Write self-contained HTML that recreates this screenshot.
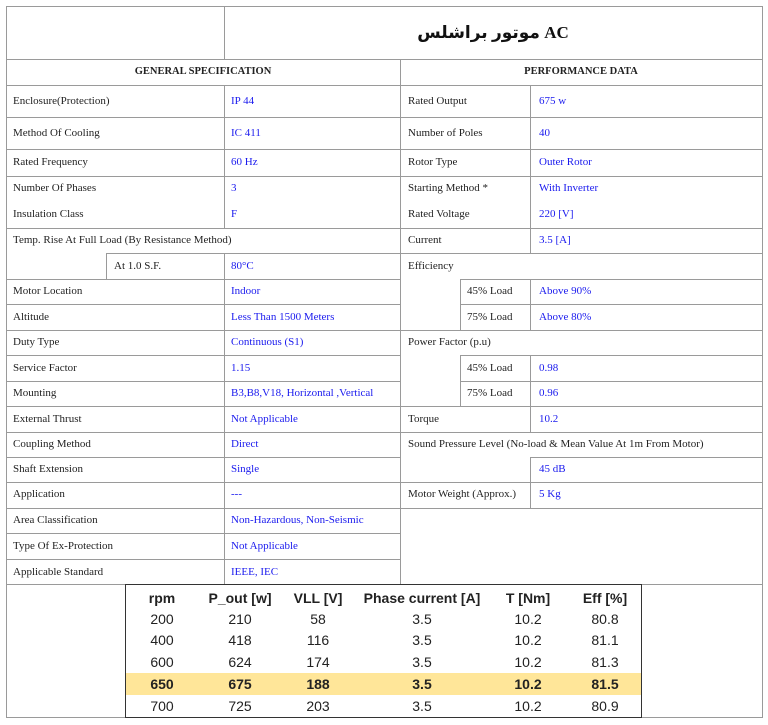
<!DOCTYPE html>
<html><head><meta charset="utf-8"><style>
body{margin:0;width:768px;height:725px;background:#fff;position:relative;overflow:hidden;font-family:"Liberation Serif",serif;font-size:11px;color:#222}
.h{position:absolute;height:1px;background:#9a9a9a}
.v{position:absolute;width:1px;background:#9a9a9a}
.t{position:absolute;white-space:nowrap;line-height:14px}
.b{color:#1a1aee}
.c{position:absolute;white-space:nowrap;font-family:"Liberation Sans",sans-serif;font-size:14px;color:#222;transform:translateX(-50%);line-height:18px}
.bd{font-weight:bold}
</style></head><body>
<div class="h" style="left:6px;width:757px;top:6px"></div>
<div class="h" style="left:6px;width:757px;top:59px"></div>
<div class="h" style="left:6px;width:757px;top:85px"></div>
<div class="h" style="left:6px;width:757px;top:117px"></div>
<div class="h" style="left:6px;width:757px;top:149px"></div>
<div class="h" style="left:6px;width:757px;top:176px"></div>
<div class="h" style="left:6px;width:757px;top:228px"></div>
<div class="h" style="left:106px;width:657px;top:253px"></div>
<div class="h" style="left:6px;width:394px;top:279px"></div><div class="h" style="left:460px;width:303px;top:279px"></div>
<div class="h" style="left:6px;width:394px;top:304px"></div><div class="h" style="left:460px;width:303px;top:304px"></div>
<div class="h" style="left:6px;width:757px;top:330px"></div>
<div class="h" style="left:6px;width:394px;top:355px"></div><div class="h" style="left:460px;width:303px;top:355px"></div>
<div class="h" style="left:6px;width:394px;top:381px"></div><div class="h" style="left:460px;width:303px;top:381px"></div>
<div class="h" style="left:6px;width:757px;top:406px"></div>
<div class="h" style="left:6px;width:757px;top:432px"></div>
<div class="h" style="left:6px;width:394px;top:457px"></div><div class="h" style="left:530px;width:233px;top:457px"></div>
<div class="h" style="left:6px;width:757px;top:482px"></div>
<div class="h" style="left:6px;width:757px;top:508px"></div>
<div class="h" style="left:6px;width:394px;top:533px"></div>
<div class="h" style="left:6px;width:394px;top:559px"></div>
<div class="h" style="left:6px;width:757px;top:584px"></div>
<div class="h" style="left:6px;width:757px;top:717px"></div>
<div class="v" style="left:6px;top:6px;height:712px"></div>
<div class="v" style="left:762px;top:6px;height:712px"></div>
<div class="v" style="left:224px;top:6px;height:53px"></div>
<div class="v" style="left:400px;top:59px;height:525px"></div>
<div class="v" style="left:224px;top:85px;height:143px"></div>
<div class="v" style="left:224px;top:253px;height:331px"></div>
<div class="v" style="left:106px;top:253px;height:26px"></div>
<div class="v" style="left:530px;top:85px;height:143px"></div>
<div class="v" style="left:530px;top:228px;height:25px"></div>
<div class="v" style="left:530px;top:279px;height:51px"></div>
<div class="v" style="left:460px;top:279px;height:51px"></div>
<div class="v" style="left:530px;top:355px;height:77px"></div>
<div class="v" style="left:460px;top:355px;height:51px"></div>
<div class="v" style="left:530px;top:457px;height:51px"></div>

<div class="t" style="left:224px;width:538px;text-align:center;top:20px;font-size:17px;line-height:26px;font-weight:bold;color:#111;font-family:'Liberation Serif','DejaVu Sans',serif">موتور براشلس AC</div>
<div class="t" style="left:6px;width:394px;text-align:center;top:65px;font-weight:bold;font-size:10.5px">GENERAL SPECIFICATION</div>
<div class="t" style="left:400px;width:362px;text-align:center;top:65px;font-weight:bold;font-size:10.5px">PERFORMANCE DATA</div>

<div class="t" style="left:13px;top:94px">Enclosure(Protection)</div><div class="t b" style="left:231px;top:94px">IP 44</div>
<div class="t" style="left:13px;top:126px">Method Of Cooling</div><div class="t b" style="left:231px;top:126px">IC 411</div>
<div class="t" style="left:13px;top:155px">Rated Frequency</div><div class="t b" style="left:231px;top:155px">60 Hz</div>
<div class="t" style="left:13px;top:181px">Number Of Phases</div><div class="t b" style="left:231px;top:181px">3</div>
<div class="t" style="left:13px;top:207px">Insulation Class</div><div class="t b" style="left:231px;top:207px">F</div>
<div class="t" style="left:13px;top:233px">Temp. Rise At Full Load (By Resistance Method)</div>
<div class="t" style="left:114px;top:259px">At 1.0 S.F.</div><div class="t b" style="left:231px;top:259px">80°C</div>
<div class="t" style="left:13px;top:284px">Motor Location</div><div class="t b" style="left:231px;top:284px">Indoor</div>
<div class="t" style="left:13px;top:310px">Altitude</div><div class="t b" style="left:231px;top:310px">Less Than 1500 Meters</div>
<div class="t" style="left:13px;top:335px">Duty Type</div><div class="t b" style="left:231px;top:335px">Continuous (S1)</div>
<div class="t" style="left:13px;top:361px">Service Factor</div><div class="t b" style="left:231px;top:361px">1.15</div>
<div class="t" style="left:13px;top:386px">Mounting</div><div class="t b" style="left:231px;top:386px">B3,B8,V18, Horizontal ,Vertical</div>
<div class="t" style="left:13px;top:412px">External Thrust</div><div class="t b" style="left:231px;top:412px">Not Applicable</div>
<div class="t" style="left:13px;top:437px">Coupling Method</div><div class="t b" style="left:231px;top:437px">Direct</div>
<div class="t" style="left:13px;top:462px">Shaft Extension</div><div class="t b" style="left:231px;top:462px">Single</div>
<div class="t" style="left:13px;top:487px">Application</div><div class="t b" style="left:231px;top:487px">---</div>
<div class="t" style="left:13px;top:513px">Area Classification</div><div class="t b" style="left:231px;top:513px">Non-Hazardous, Non-Seismic</div>
<div class="t" style="left:13px;top:539px">Type Of Ex-Protection</div><div class="t b" style="left:231px;top:539px">Not Applicable</div>
<div class="t" style="left:13px;top:565px">Applicable Standard</div><div class="t b" style="left:231px;top:565px">IEEE, IEC</div>

<div class="t" style="left:408px;top:94px">Rated Output</div><div class="t b" style="left:539px;top:94px">675 w</div>
<div class="t" style="left:408px;top:126px">Number of Poles</div><div class="t b" style="left:539px;top:126px">40</div>
<div class="t" style="left:408px;top:155px">Rotor Type</div><div class="t b" style="left:539px;top:155px">Outer Rotor</div>
<div class="t" style="left:408px;top:181px">Starting Method *</div><div class="t b" style="left:539px;top:181px">With Inverter</div>
<div class="t" style="left:408px;top:207px">Rated Voltage</div><div class="t b" style="left:539px;top:207px">220 [V]</div>
<div class="t" style="left:408px;top:233px">Current</div><div class="t b" style="left:539px;top:233px">3.5 [A]</div>
<div class="t" style="left:408px;top:259px">Efficiency</div>
<div class="t" style="left:467px;top:284px">45% Load</div><div class="t b" style="left:539px;top:284px">Above 90%</div>
<div class="t" style="left:467px;top:310px">75% Load</div><div class="t b" style="left:539px;top:310px">Above 80%</div>
<div class="t" style="left:408px;top:335px">Power Factor (p.u)</div>
<div class="t" style="left:467px;top:361px">45% Load</div><div class="t b" style="left:539px;top:361px">0.98</div>
<div class="t" style="left:467px;top:386px">75% Load</div><div class="t b" style="left:539px;top:386px">0.96</div>
<div class="t" style="left:408px;top:412px">Torque</div><div class="t b" style="left:539px;top:412px">10.2</div>
<div class="t" style="left:408px;top:437px">Sound Pressure Level (No-load &amp; Mean Value At 1m From Motor)</div>
<div class="t b" style="left:539px;top:462px">45 dB</div>
<div class="t" style="left:408px;top:487px">Motor Weight (Approx.)</div><div class="t b" style="left:539px;top:487px">5 Kg</div>

<div style="position:absolute;left:126px;top:673px;width:515px;height:22px;background:#ffe699"></div>
<div style="position:absolute;left:125px;top:584px;width:515px;height:132px;border:1.5px solid #333"></div>
<div class="c bd" style="left:162px;top:589px">rpm</div><div class="c bd" style="left:240px;top:589px">P_out [w]</div><div class="c bd" style="left:318px;top:589px">VLL [V]</div><div class="c bd" style="left:422px;top:589px">Phase current [A]</div><div class="c bd" style="left:528px;top:589px">T [Nm]</div><div class="c bd" style="left:605px;top:589px">Eff [%]</div>
<div class="c" style="left:162px;top:610px">200</div><div class="c" style="left:240px;top:610px">210</div><div class="c" style="left:318px;top:610px">58</div><div class="c" style="left:422px;top:610px">3.5</div><div class="c" style="left:528px;top:610px">10.2</div><div class="c" style="left:605px;top:610px">80.8</div>
<div class="c" style="left:162px;top:631px">400</div><div class="c" style="left:240px;top:631px">418</div><div class="c" style="left:318px;top:631px">116</div><div class="c" style="left:422px;top:631px">3.5</div><div class="c" style="left:528px;top:631px">10.2</div><div class="c" style="left:605px;top:631px">81.1</div>
<div class="c" style="left:162px;top:653px">600</div><div class="c" style="left:240px;top:653px">624</div><div class="c" style="left:318px;top:653px">174</div><div class="c" style="left:422px;top:653px">3.5</div><div class="c" style="left:528px;top:653px">10.2</div><div class="c" style="left:605px;top:653px">81.3</div>
<div class="c bd" style="left:162px;top:675px">650</div><div class="c bd" style="left:240px;top:675px">675</div><div class="c bd" style="left:318px;top:675px">188</div><div class="c bd" style="left:422px;top:675px">3.5</div><div class="c bd" style="left:528px;top:675px">10.2</div><div class="c bd" style="left:605px;top:675px">81.5</div>
<div class="c" style="left:162px;top:697px">700</div><div class="c" style="left:240px;top:697px">725</div><div class="c" style="left:318px;top:697px">203</div><div class="c" style="left:422px;top:697px">3.5</div><div class="c" style="left:528px;top:697px">10.2</div><div class="c" style="left:605px;top:697px">80.9</div>
</body></html>
